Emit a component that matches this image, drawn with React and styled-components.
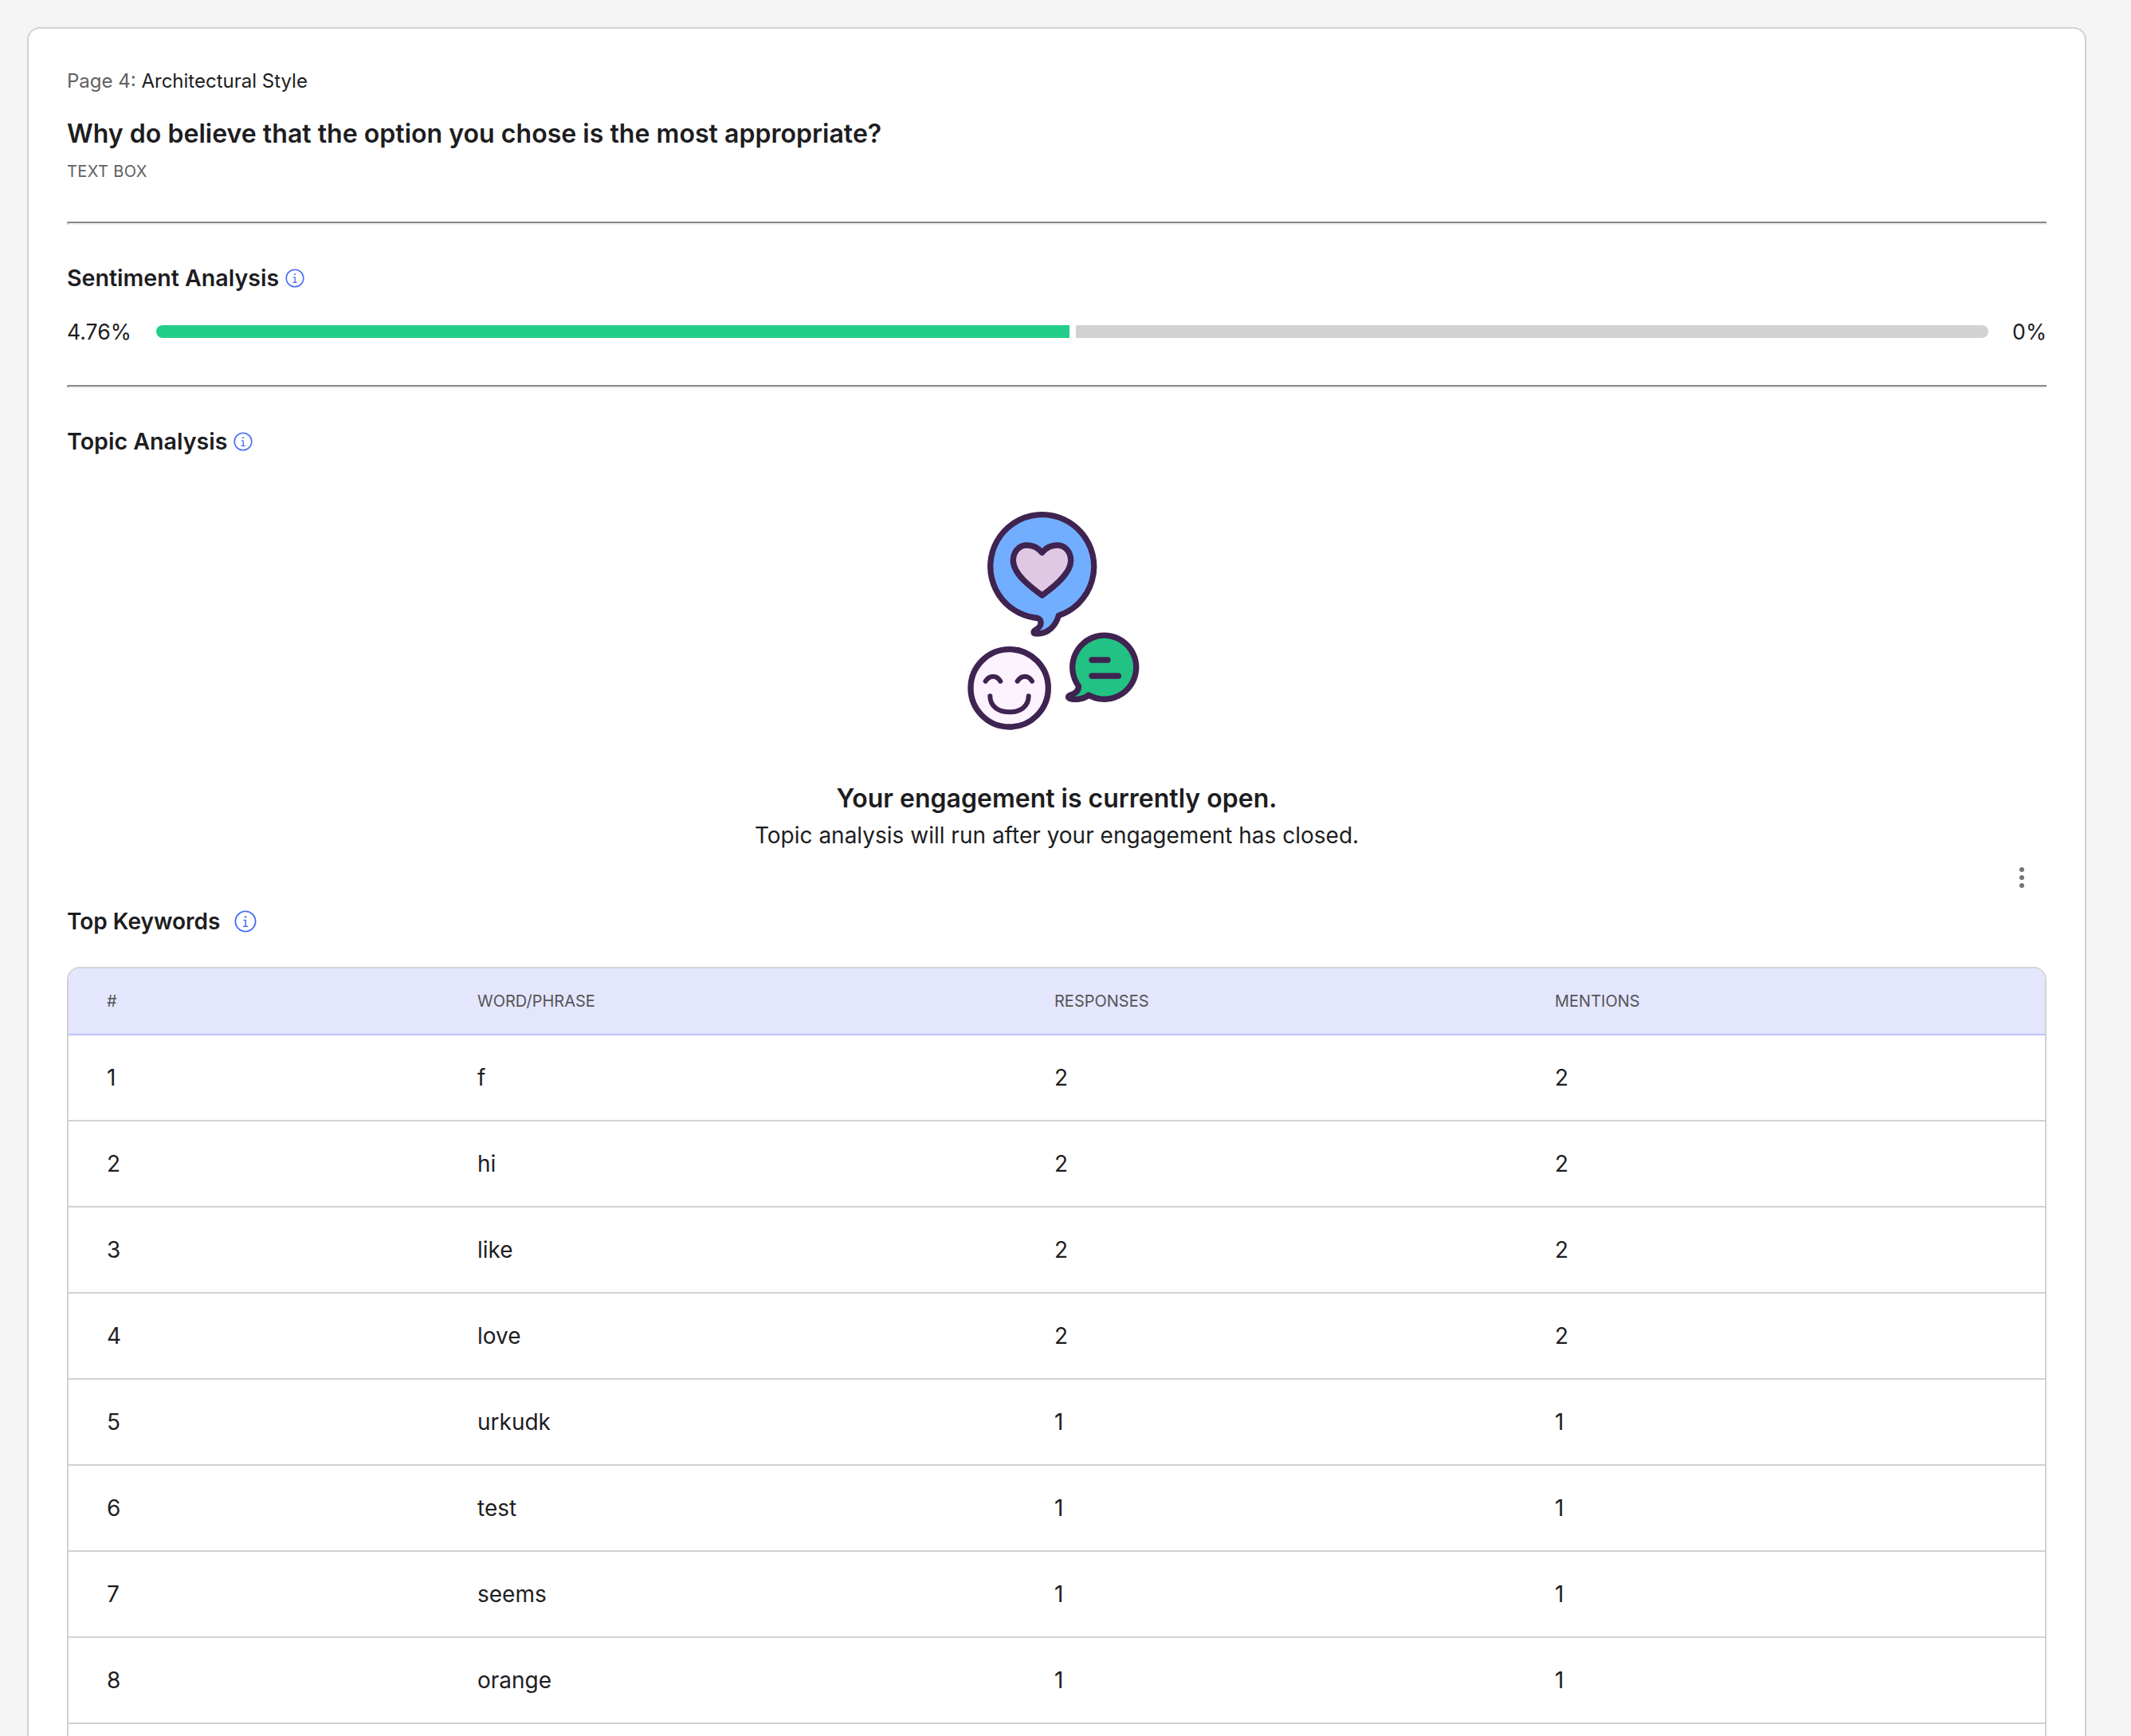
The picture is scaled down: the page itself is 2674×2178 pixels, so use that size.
import React from "react";
import styled, { createGlobalStyle } from "styled-components";

const Global = createGlobalStyle`
  html, body { margin: 0; padding: 0; height: 2178px; overflow: hidden; background: #f5f5f5; }
  #root { height: 2178px; overflow: hidden; }
  * { box-sizing: border-box; }
  body { font-family: Inter, "Liberation Sans", sans-serif; color: #1d1d1f; }
`;

const Page = styled.div`
  padding: 34px 56px 0 34px;
`;
const Card = styled.section`
  background: #fff;
  border: 2px solid #d2d2d2;
  border-radius: 16px;
  padding: 48px 48px 0;
  min-height: 2300px;
`;
const PageLabel = styled.div`
  font-size: 24px;
  line-height: 36px;
  color: #1d1d1f;
  & > span { color: #616161; }
`;
const Question = styled.h2`
  margin: 26px 0 0;
  font-size: 32.1px;
  line-height: 44px;
  font-weight: 600;
`;
const TypeTag = styled.div`
  margin-top: 11px;
  font-size: 20px;
  letter-spacing: 0.4px;
  line-height: 28px;
  color: #616161;
`;
const Divider = styled.hr`
  margin: ${(p) => p.$top}px 0 0;
  height: 4px;
  border: 0;
  border-top: 2px solid #888;
  border-bottom: 2px solid #eee;
  border-left: 2px solid #aaa;
`;
const Heading = styled.div`
  display: flex;
  align-items: center;
  gap: ${(p) => p.$gap}px;
  margin-top: ${(p) => p.$top}px;
  font-size: ${(p) => p.$size}px;
  line-height: 36px;
  font-weight: 600;
`;
const SentimentRow = styled.div`
  display: flex;
  align-items: center;
  height: 40px;
  margin-top: 29px;
  font-size: 26.6px;
`;
const Bar = styled.div`
  flex: 1;
  display: flex;
  gap: 8px;
  margin: 0 30px 0 31px;
  height: 16px;
`;
const BarPart = styled.div`
  flex: ${(p) => p.$grow} 1 0;
  background: ${(p) => p.$color};
  border-radius: ${(p) => p.$radius};
`;
const Illustration = styled.div`
  display: flex;
  justify-content: center;
  margin-top: 48px;
  padding-right: 12px;
`;
const EmptyTitle = styled.div`
  margin-top: 40px;
  text-align: center;
  font-size: 32px;
  line-height: 44px;
  font-weight: 600;
`;
const EmptyText = styled.div`
  margin-top: 4px;
  text-align: center;
  font-size: 28px;
  line-height: 40px;
`;
const KebabRow = styled.div`
  display: flex;
  justify-content: flex-end;
  height: 70px;
  padding: 17px 27px 0 0;
`;
const Table = styled.div`
  margin-top: 39px;
  border: 2px solid #d2d2d2;
  border-bottom: 0;
  border-radius: 16px 16px 0 0;
  overflow: hidden;
`;
const Row = styled.div`
  display: grid;
  grid-template-columns: 465px 724px 628px 1fr;
  align-items: center;
  height: 108px;
  border-bottom: 2px solid #d2d2d2;
  font-size: 28px;
`;
const HeadRow = styled(Row)`
  height: 84px;
  background: #e4e6fe;
  border-bottom-color: #b9c2fb;
  font-size: 20px;
  color: #555;
`;
const Cell = styled.div`
  padding-left: 48px;
`;

const InfoIcon = ({ size }) => (
  <svg width={size} height={size} viewBox="0 0 24 24" fill="none" stroke="#4a6cf6" strokeWidth="1.6" strokeLinecap="round" strokeLinejoin="round">
    <circle cx="12" cy="12" r="10.8" />
    <circle cx="12" cy="7.2" r="0.7" fill="#4a6cf6" strokeWidth="0.8" />
    <path d="M10.3 10.8H12.2V17.2M10 17.4H14.2" strokeWidth="1.3" />
  </svg>
);

const Kebab = () => (
  <svg width="8" height="32" viewBox="0 0 8 32" fill="#757575">
    <circle cx="4" cy="6" r="3" />
    <circle cx="4" cy="16" r="3" />
    <circle cx="4" cy="26" r="3" />
  </svg>
);

const Art = () => (
  <svg width="280" height="320" viewBox="0 0 840 960" fill="none" stroke="#3f2350" strokeWidth="22" strokeLinecap="round" strokeLinejoin="round">
    <path fill="#72aeff" d="M355 465A195 195 0 1 1 445 457C435 495 405 525 365 525C345 525 350 515 360 510C385 495 385 465 355 465Z" />
    <path fill="#e0c8e4" d="M383 220C365 198 345 192 325 192C295 192 274 218 274 250C274 300 340 350 383 381C426 350 491 300 491 250C491 218 470 192 440 192C420 192 400 198 383 220Z" />
    <circle cx="260" cy="730" r="146" fill="#fdf3ff" />
    <path d="M170 704C185 680 212 680 226 704M290 704C305 680 332 680 345 704" strokeWidth="18" />
    <path d="M187 760C187 800 220 820 260 820C300 820 332 800 332 760" strokeWidth="18" />
    <path fill="#22c285" d="M520 722A120 120 0 1 1 558 756C540 772 510 775 490 770C478 767 480 760 490 756C508 750 522 740 520 722Z" />
    <path d="M570 624H630M570 684H670" />
  </svg>
);

const rows = [
  ["1", "f", "2", "2"],
  ["2", "hi", "2", "2"],
  ["3", "like", "2", "2"],
  ["4", "love", "2", "2"],
  ["5", "urkudk", "1", "1"],
  ["6", "test", "1", "1"],
  ["7", "seems", "1", "1"],
  ["8", "orange", "1", "1"],
  ["", "", "", ""],
];

export default function App() {
  return (
    <Page>
      <Global />
      <Card>
        <PageLabel><span>Page 4:</span> Architectural Style</PageLabel>
        <Question>Why do believe that the option you chose is the most appropriate?</Question>
        <TypeTag>TEXT BOX</TypeTag>
        <Divider $top={49} />
        <Heading $top={49} $gap={8} $size={28.6}>Sentiment Analysis <InfoIcon size={24} /></Heading>
        <SentimentRow>
          <span>4.76%</span>
          <Bar>
            <BarPart $grow={1146} $color="#22cd8a" $radius="8px 0 0 8px" />
            <BarPart $grow={1145} $color="#d2d2d2" $radius="0 8px 8px 0" />
          </Bar>
          <span>0%</span>
        </SentimentRow>
        <Divider $top={47} />
        <Heading $top={49} $gap={8} $size={28.6}>Topic Analysis <InfoIcon size={24} /></Heading>
        <Illustration><Art /></Illustration>
        <EmptyTitle>Your engagement is currently open.</EmptyTitle>
        <EmptyText>Topic analysis will run after your engagement has closed.</EmptyText>
        <KebabRow><Kebab /></KebabRow>
        <Heading $top={0} $gap={18} $size={28}>Top Keywords <InfoIcon size={28} /></Heading>
        <Table>
          <HeadRow>
            <Cell>#</Cell>
            <Cell>WORD/PHRASE</Cell>
            <Cell>RESPONSES</Cell>
            <Cell>MENTIONS</Cell>
          </HeadRow>
          {rows.map((r, i) => (
            <Row key={i}>
              {r.map((c, j) => <Cell key={j}>{c}</Cell>)}
            </Row>
          ))}
        </Table>
      </Card>
    </Page>
  );
}
